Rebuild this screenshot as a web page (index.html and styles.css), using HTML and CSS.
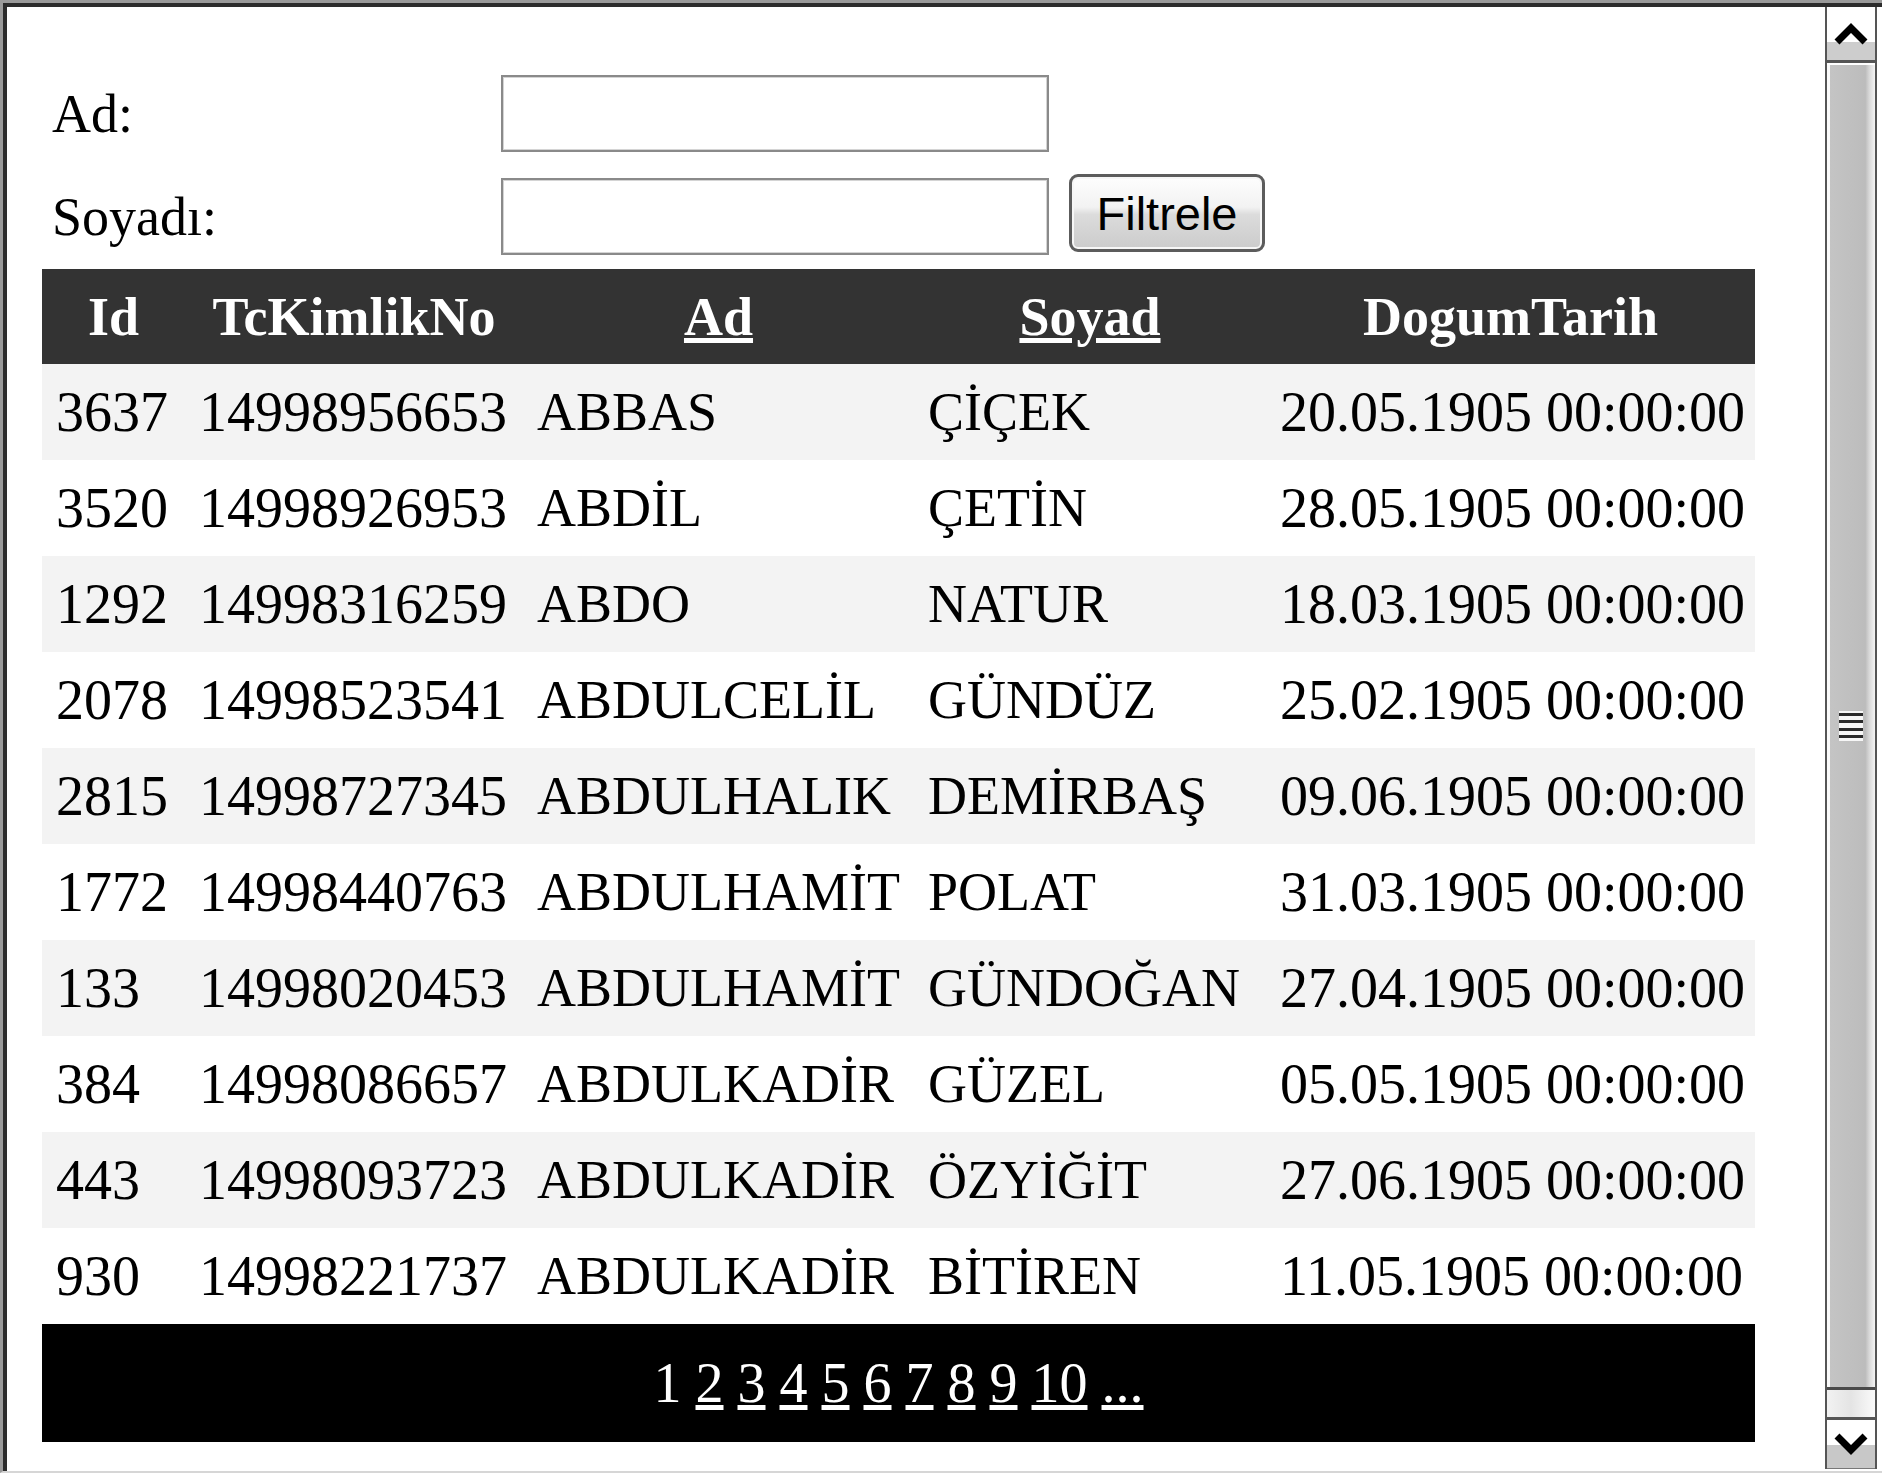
FILE: index.html
```html
<!DOCTYPE html>
<html lang="tr">
<head>
<meta charset="utf-8">
<title>Kişi Listesi</title>
<link rel="stylesheet" href="styles.css">
</head>
<body>
<div class="window">
  <div class="frame">
    <div class="page">
      <form class="filter">
        <div class="field">
          <label class="label" for="ad">Ad:</label>
          <input class="text-input" id="ad" type="text">
        </div>
        <div class="field">
          <label class="label" for="soyad">Soyadı:</label>
          <input class="text-input" id="soyad" type="text">
          <button class="btn" type="button">Filtrele</button>
        </div>
      </form>

      <table class="grid">
        <colgroup>
          <col class="c-id">
          <col class="c-tc">
          <col class="c-ad">
          <col class="c-soyad">
          <col class="c-date">
        </colgroup>
        <thead>
          <tr>
            <th>Id</th>
            <th>TcKimlikNo</th>
            <th><a href="#">Ad</a></th>
            <th><a href="#">Soyad</a></th>
            <th>DogumTarih</th>
          </tr>
        </thead>
        <tbody>
          <tr><td>3637</td><td>14998956653</td><td>ABBAS</td><td>ÇİÇEK</td><td>20.05.1905 00:00:00</td></tr>
          <tr><td>3520</td><td>14998926953</td><td>ABDİL</td><td>ÇETİN</td><td>28.05.1905 00:00:00</td></tr>
          <tr><td>1292</td><td>14998316259</td><td>ABDO</td><td>NATUR</td><td>18.03.1905 00:00:00</td></tr>
          <tr><td>2078</td><td>14998523541</td><td>ABDULCELİL</td><td>GÜNDÜZ</td><td>25.02.1905 00:00:00</td></tr>
          <tr><td>2815</td><td>14998727345</td><td>ABDULHALIK</td><td>DEMİRBAŞ</td><td>09.06.1905 00:00:00</td></tr>
          <tr><td>1772</td><td>14998440763</td><td>ABDULHAMİT</td><td>POLAT</td><td>31.03.1905 00:00:00</td></tr>
          <tr><td>133</td><td>14998020453</td><td>ABDULHAMİT</td><td>GÜNDOĞAN</td><td>27.04.1905 00:00:00</td></tr>
          <tr><td>384</td><td>14998086657</td><td>ABDULKADİR</td><td>GÜZEL</td><td>05.05.1905 00:00:00</td></tr>
          <tr><td>443</td><td>14998093723</td><td>ABDULKADİR</td><td>ÖZYİĞİT</td><td>27.06.1905 00:00:00</td></tr>
          <tr><td>930</td><td>14998221737</td><td>ABDULKADİR</td><td>BİTİREN</td><td>11.05.1905 00:00:00</td></tr>
        </tbody>
        <tfoot>
          <tr>
            <td class="pager" colspan="5"><span>1</span> <a href="#">2</a> <a href="#">3</a> <a href="#">4</a> <a href="#">5</a> <a href="#">6</a> <a href="#">7</a> <a href="#">8</a> <a href="#">9</a> <a href="#">10</a> <a href="#">...</a></td>
          </tr>
        </tfoot>
      </table>
    </div>

    <div class="scrollbar">
      <div class="sb-btn sb-up">
        <svg width="34" height="24" viewBox="0 0 34 24"><polyline points="3,20 17,6 31,20" fill="none" stroke="#000" stroke-width="7"/></svg>
      </div>
      <div class="sb-thumb"><div class="grip"></div></div>
      <div class="sb-track"></div>
      <div class="sb-btn sb-down">
        <svg width="34" height="24" viewBox="0 0 34 24"><polyline points="3,4 17,18 31,4" fill="none" stroke="#000" stroke-width="7"/></svg>
      </div>
    </div>
  </div>
</div>
</body>
</html>
```

FILE: styles.css
```css
html, body {
  margin: 0;
  padding: 0;
  background: #fff;
}

body {
  font-family: "Liberation Serif", "Times New Roman", serif;
  color: #000;
}

.window {
  width: 1882px;
  height: 1473px;
  box-sizing: border-box;
  border-top: 3px solid #9a9a9a;
  border-left: 3px solid #9a9a9a;
  border-bottom: 2px solid #d6d6d6;
  background: #fff;
}

.frame {
  height: 100%;
  box-sizing: border-box;
  border-top: 4px solid #2c2c2c;
  border-left: 4px solid #2c2c2c;
  display: flex;
}

.page {
  flex: 0 0 1818px;
  box-sizing: border-box;
  padding: 68px 0 0 35px;
}

/* filter form */
.filter {
  margin: 0 0 14px 10px;
  display: flex;
  flex-direction: column;
  gap: 26px;
}

.field {
  display: flex;
  align-items: center;
}

.label {
  width: 449px;
  font-size: 54px;
  line-height: 1;
}

.text-input {
  width: 548px;
  height: 77px;
  box-sizing: border-box;
  border: 2px solid #8a8a8a;
  box-shadow: inset 0 0 0 1px #d4d4d4;
  background: #fff;
  margin: 0;
  padding: 0;
}

.btn {
  align-self: flex-start;
  margin: -4px 0 0 20px;
  width: 196px;
  height: 78px;
  box-sizing: border-box;
  border: 3px solid #5c5c5c;
  border-radius: 9px;
  background: linear-gradient(to bottom, #fefefe 0%, #f2f2f2 42%, #dcdcdc 52%, #cbcbcb 100%);
  box-shadow: inset 0 0 0 2px #f6f6f6;
  font-family: "Liberation Sans", Arial, sans-serif;
  font-size: 47px;
  color: #000;
  padding: 0;
}

/* grid */
.grid {
  width: 1713px;
  table-layout: fixed;
  border-collapse: collapse;
  border-spacing: 0;
  font-size: 54px;
}

.c-id { width: 143px; }
.c-tc { width: 338px; }
.c-ad { width: 391px; }
.c-soyad { width: 352px; }
.c-date { width: 489px; }

.grid th {
  background: #333;
  color: #fff;
  font-weight: bold;
  text-align: center;
  height: 95px;
  padding: 0;
  white-space: nowrap;
}

.grid th a {
  color: #fff;
  text-decoration: underline;
}

.grid td {
  height: 96px;
  padding: 0 0 0 14px;
  white-space: nowrap;
  vertical-align: middle;
}

.grid tbody td:nth-child(1),
.grid tbody td:nth-child(2),
.grid tbody td:nth-child(5) {
  font-size: 56px;
}

.grid tbody tr:nth-child(odd) td {
  background: #f3f3f3;
}

.grid td.pager {
  height: 118px;
  background: #000;
  color: #fff;
  text-align: center;
  padding: 0;
  font-size: 56px;
}

.pager a {
  color: #fff;
  text-decoration: underline;
}

/* scrollbar */
.scrollbar {
  width: 52px;
  box-sizing: border-box;
  border-left: 2px solid #555;
  border-right: 2px solid #555;
  margin-bottom: 2px;
  display: flex;
  flex-direction: column;
}

.sb-btn {
  display: flex;
  align-items: center;
  justify-content: center;
  box-sizing: border-box;
}

.sb-up {
  height: 56px;
  border-bottom: 3px solid #555;
  background: linear-gradient(to bottom, #fff 0%, #fff 66%, #cdcdcd 66%, #cdcdcd 100%);
}

.sb-thumb {
  flex: 1;
  margin-top: 2px;
  border-bottom: 3px solid #4a4a4a;
  background: linear-gradient(to right, #fafafa 0, #fafafa 3px, #c4c4c4 3px, #bcbcbc 80%, #d8d8d8 88%, #f4f4f4 100%);
  display: flex;
  align-items: center;
  justify-content: center;
}

.grip {
  width: 24px;
  height: 30px;
  background: repeating-linear-gradient(to bottom, #f6f6f6 0, #f6f6f6 2px, #2a2a2a 2px, #2a2a2a 5px, #f6f6f6 5px, #f6f6f6 7.5px);
}

.sb-track {
  height: 27px;
  background: linear-gradient(to right, #f2f2f2 0%, #e4e4e4 50%, #fafafa 100%);
}

.sb-down {
  height: 52px;
  border-top: 3px solid #555;
  border-bottom: 1px solid #777;
  background: linear-gradient(to bottom, #fff 0%, #fff 52%, #c8c8c8 52%, #c8c8c8 100%);
}
```
